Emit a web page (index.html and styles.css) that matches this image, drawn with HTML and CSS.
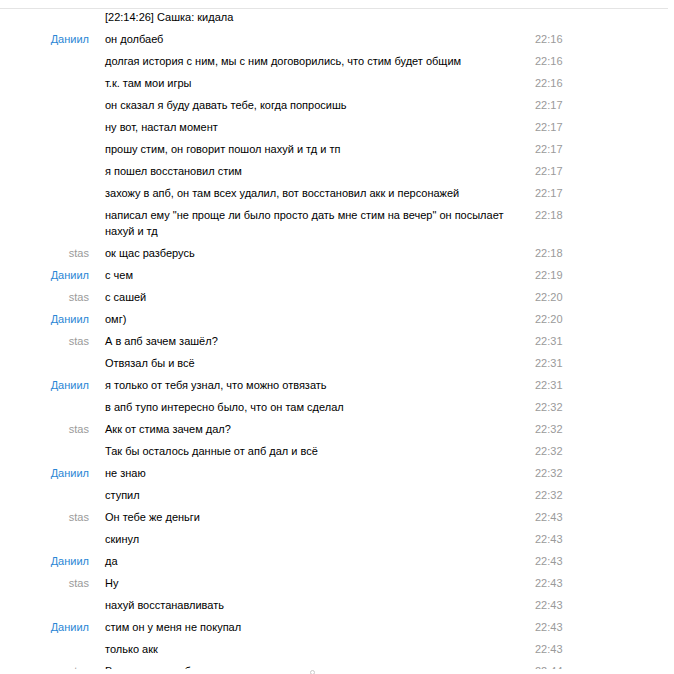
FILE: index.html
```html
<!DOCTYPE html>
<html lang="ru">
<head>
<meta charset="utf-8">
<link rel="stylesheet" href="styles.css">
</head>
<body>
<div class="topline"></div>
<div class="log">
  <div class="row first"><div class="name"></div><div class="text">[22:14:26] Сашка: кидала</div><div class="time"></div></div>
  <div class="row"><div class="name blue">Даниил</div><div class="text">он долбаеб</div><div class="time">22:16</div></div>
  <div class="row"><div class="name"></div><div class="text">долгая история с ним, мы с ним договорились, что стим будет общим</div><div class="time">22:16</div></div>
  <div class="row"><div class="name"></div><div class="text">т.к. там мои игры</div><div class="time">22:16</div></div>
  <div class="row"><div class="name"></div><div class="text">он сказал я буду давать тебе, когда попросишь</div><div class="time">22:17</div></div>
  <div class="row"><div class="name"></div><div class="text">ну вот, настал момент</div><div class="time">22:17</div></div>
  <div class="row"><div class="name"></div><div class="text">прошу стим, он говорит пошол нахуй и тд и тп</div><div class="time">22:17</div></div>
  <div class="row"><div class="name"></div><div class="text">я пошел восстановил стим</div><div class="time">22:17</div></div>
  <div class="row"><div class="name"></div><div class="text">захожу в апб, он там всех удалил, вот восстановил акк и персонажей</div><div class="time">22:17</div></div>
  <div class="row"><div class="name"></div><div class="text">написал ему "не проще ли было просто дать мне стим на вечер" он посылает нахуй и тд</div><div class="time">22:18</div></div>
  <div class="row"><div class="name gray">stas</div><div class="text">ок щас разберусь</div><div class="time">22:18</div></div>
  <div class="row"><div class="name blue">Даниил</div><div class="text">с чем</div><div class="time">22:19</div></div>
  <div class="row"><div class="name gray">stas</div><div class="text">с сашей</div><div class="time">22:20</div></div>
  <div class="row"><div class="name blue">Даниил</div><div class="text">омг)</div><div class="time">22:20</div></div>
  <div class="row"><div class="name gray">stas</div><div class="text">А в апб зачем зашёл?</div><div class="time">22:31</div></div>
  <div class="row"><div class="name"></div><div class="text">Отвязал бы и всё</div><div class="time">22:31</div></div>
  <div class="row"><div class="name blue">Даниил</div><div class="text">я только от тебя узнал, что можно отвязать</div><div class="time">22:31</div></div>
  <div class="row"><div class="name"></div><div class="text">в апб тупо интересно было, что он там сделал</div><div class="time">22:32</div></div>
  <div class="row"><div class="name gray">stas</div><div class="text">Акк от стима зачем дал?</div><div class="time">22:32</div></div>
  <div class="row"><div class="name"></div><div class="text">Так бы осталось данные от апб дал и всё</div><div class="time">22:32</div></div>
  <div class="row"><div class="name blue">Даниил</div><div class="text">не знаю</div><div class="time">22:32</div></div>
  <div class="row"><div class="name"></div><div class="text">ступил</div><div class="time">22:32</div></div>
  <div class="row"><div class="name gray">stas</div><div class="text">Он тебе же деньги</div><div class="time">22:43</div></div>
  <div class="row"><div class="name"></div><div class="text">скинул</div><div class="time">22:43</div></div>
  <div class="row"><div class="name blue">Даниил</div><div class="text">да</div><div class="time">22:43</div></div>
  <div class="row"><div class="name gray">stas</div><div class="text">Ну</div><div class="time">22:43</div></div>
  <div class="row"><div class="name"></div><div class="text">нахуй восстанавливать</div><div class="time">22:43</div></div>
  <div class="row"><div class="name blue">Даниил</div><div class="text">стим он у меня не покупал</div><div class="time">22:43</div></div>
  <div class="row"><div class="name"></div><div class="text">только акк</div><div class="time">22:43</div></div>
  <div class="row"><div class="name gray">stas</div><div class="text">В этом-то и проблема</div><div class="time">22:44</div></div>
</div>
<div class="scroll-dot"></div>
</body>
</html>
```

FILE: styles.css
```css
html, body {
  margin: 0;
  padding: 0;
  background: #fff;
  height: 674px;
  overflow: hidden;
}
body {
  position: relative;
  font-family: "Liberation Sans", Arial, sans-serif;
  font-size: 11px;
  color: #000;
}
.topline {
  height: 1px;
  margin-top: 8px;
  margin-right: 6px;
  background: #e4e4e4;
}
.log {
  display: flex;
  flex-direction: column;
  height: 660px;
  overflow: hidden;
}
.row {
  display: flex;
  align-items: flex-start;
  padding: 3px 0;
  line-height: 16px;
  flex: none;
}
.row.first {
  padding-top: 0;
}
.name {
  width: 89px;
  flex: none;
  text-align: right;
}
.name.blue { color: #2a86d5; }
.name.gray { color: #9a9a9a; }
.text {
  width: 420px;
  flex: none;
  margin-left: 16px;
}
.time {
  margin-left: 10px;
  color: #9a9a9a;
}
.scroll-dot {
  position: absolute;
  left: 310px;
  top: 670px;
  width: 3px;
  height: 3px;
  border: 1px solid #c8c8c8;
  border-radius: 50%;
}
```
